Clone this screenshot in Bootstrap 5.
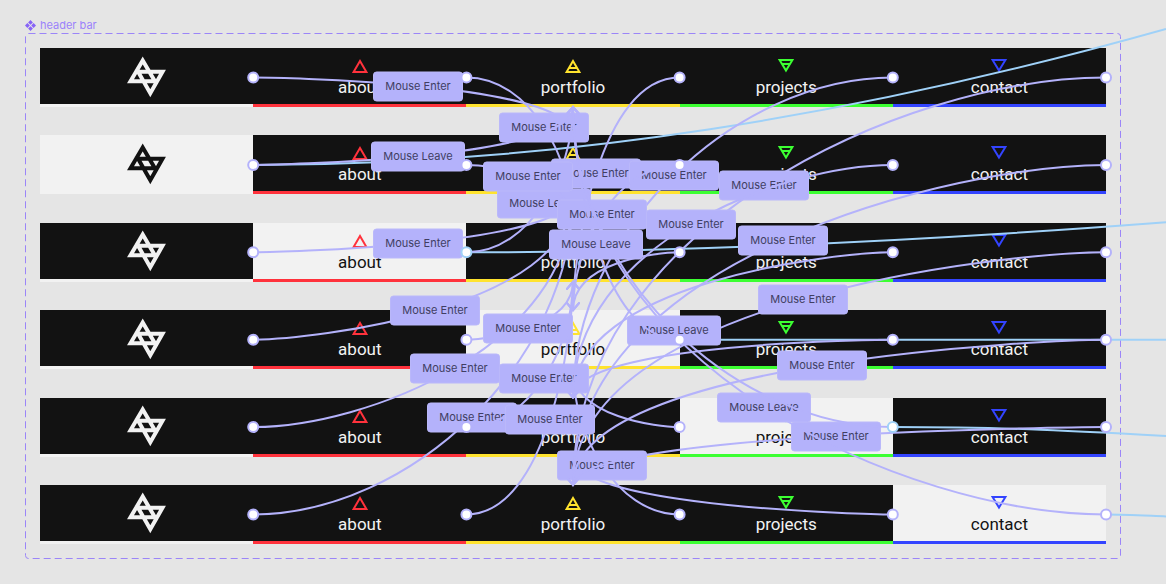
<!DOCTYPE html>
<html lang="en">
<head>
<meta charset="utf-8">
<meta name="viewport" content="width=device-width, initial-scale=1">
<title>header bar</title>
<link rel="stylesheet" href="https://cdn.jsdelivr.net/npm/bootstrap@5.3.0/dist/css/bootstrap.min.css">
<style>
  body { background: #e5e5e5; font-family: Inter, "Liberation Sans", sans-serif; }
  .board { min-height: 100vh; padding: 17px 45px 25px 25px; }
  .set-title { font-size: 11px; line-height: 16px; color: #9b82fb; gap: 4px; }
  .set-frame { padding: 15px; }
  .variant { height: 59px; }
  .tab { flex: 1 1 0; background: #121212; color: #f2f2f2; border-bottom: 3px solid var(--tone);
         font-family: Roboto, "Liberation Sans", sans-serif; font-size: 17px; line-height: 24px; }
  .tab.hovered { background: #f2f2f2; color: #121212; }
  .tab-item { padding: 10px 0 5px; gap: 3px; }
  .tone-white { --tone: #f2f2f2; }
  .tone-red { --tone: #ff323c; }
  .tone-yellow { --tone: #ffe32e; }
  .tone-green { --tone: #3cff32; }
  .tone-blue { --tone: #3344ff; }
  .glyph { fill: none; stroke: var(--tone); stroke-width: 2; }
  .logo { fill: none; stroke: currentColor; stroke-width: 4; }
  .wires { inset: 0; pointer-events: none; }
  .wire { fill: none; stroke: #b4b2fb; stroke-width: 2; }
  .wire-out { fill: none; stroke: #9fd1f8; stroke-width: 2; }
  .tip { fill: none; stroke: #b4b2fb; stroke-width: 2; stroke-linecap: round; }
  .pill { fill: #b4b2fb; stroke: #bab8fa; stroke-width: 1; }
  .pill-text { fill: #403e62; font-size: 11px; text-anchor: middle; }
  .knob { fill: #fff; stroke: #b4b2fb; stroke-width: 2; }
  .knob-out { stroke: #9fd1f8; }
  .outline { fill: none; stroke: #9b85f8; stroke-width: 1; stroke-dasharray: 7 4; }
</style>
</head>
<body>
<main class="board position-relative d-flex flex-column overflow-hidden" id="board">
  <div class="set-title d-flex align-items-center">
    <svg width="11" height="11" viewBox="0 0 11 11" fill="#8763f7" aria-hidden="true"><path d="M5.500 0 7.900 2.400 5.500 4.800 3.100 2.400zM5.500 6.200 7.900 8.600 5.500 11 3.100 8.600zM2.400 3.100 4.800 5.500 2.400 7.900 0 5.500zM8.600 3.100 11 5.500 8.600 7.900 6.200 5.500z"/></svg>
    <span>header bar</span>
  </div>
  <div class="set-frame flex-grow-1 d-flex flex-column justify-content-between" id="frame"></div>
  <svg class="wires position-absolute w-100 h-100" id="wires"></svg>
</main>
<script src="https://cdn.jsdelivr.net/npm/bootstrap@5.3.0/dist/js/bootstrap.bundle.min.js"></script>
<script>
  const tabs = [
    ['about', 'red', 'M8 3 14.400 14H1.600z'],
    ['portfolio', 'yellow', 'M8 3 14.400 14H1.600zM4.500 10H11.500'],
    ['projects', 'green', 'M8 12.500 14.400 2H1.600zM4.500 6H11.500'],
    ['contact', 'blue', 'M8 12.500 14.400 2H1.600z']
  ];
  const frame = document.getElementById('frame');
  for (let row = 0; row < 6; row++) {
    const on = col => row === col + 1 ? ' hovered' : '';
    let html = `<a href="#" aria-label="home" class="tab tone-white${on(0)} d-flex align-items-center justify-content-center">
      <svg class="logo" width="40" height="43" viewBox="0 0 40 43"><path d="M15.700 5.500 3.500 26.300H27.900zM35.500 16.800 23.300 38.300 11.100 16.800z"/></svg></a>`;
    tabs.forEach(([name, tone, shape], i) => {
      html += `<a href="#" class="tab tab-item tone-${tone}${on(i + 1)} d-flex flex-column align-items-center text-decoration-none">
        <svg class="glyph" width="16" height="14" viewBox="0 0 16 14" overflow="visible"><path d="${shape}"/></svg><span>${name}</span></a>`;
    });
    const nav = document.createElement('nav');
    nav.className = 'variant d-flex';
    nav.innerHTML = html;
    frame.append(nav);
  }

  // [source row, source tab, target row, midpoint x, midpoint y, label], back to front
  const E = 'Mouse Enter', L = 'Mouse Leave';
  const links = [
    [2,2,3,618,263,''], [4,2,3,618,416,''], [2,3,4,711,282,''], [3,3,4,728,348,''], [5,3,4,728,505,''],
    [0,0,1,418,86,E], [2,0,1,418,243,E], [3,0,1,435,310,E], [4,0,1,455,368,E], [5,0,1,472,417,E],
    [0,1,2,544,127,E], [2,1,0,544,203,L], [0,2,3,596,173,E], [1,1,2,528,176,E],
    [0,3,4,674,175,E], [5,2,3,602,465,E], [4,1,2,544,378,E],
    [0,4,5,764,185,E], [1,4,5,783,240,E], [2,4,5,803,299,E], [3,4,5,822,365,E], [4,4,5,836,436,E],
    [1,2,3,602,214,E], [1,3,4,691,224,E], [3,1,2,528,328,E], [5,1,2,550,419,E],
    [1,0,0,418,156,L], [5,4,0,764,407,L], [4,3,0,674,330,L], [3,2,0,596,244,L]
  ];

  function draw() {
    const board = document.getElementById('board').getBoundingClientRect();
    const box = el => {
      const r = el.getBoundingClientRect();
      return { l: r.left - board.left, r: r.right - board.left, t: r.top - board.top, b: r.bottom - board.top };
    };
    const sx = board.width / 1166, sy = board.height / 584;
    const rows = [...frame.children];
    const port = (r, c) => { const q = box(rows[r].children[c]); return [q.r, (q.t + q.b) / 2]; };
    const f = box(frame);
    let out = `<rect class="outline" x="${f.l + .5}" y="${f.t + .5}" width="${f.r - f.l - 1}" height="${f.b - f.t - 1}" rx="3"/>`;

    // Connections that leave the board on the right
    const W = board.width;
    [[1,0,.336,0,.665,-50,-136], [2,1,.334,0,.663,-12,-30], [3,2,.3,0,.6,0,0], [4,3,.4,0,.6,3,9], [5,4,.3,0,.6,1,2]]
      .forEach(([r, c, a, ay, b, by, ey]) => {
        const [x, y] = port(r, c), w = W - x;
        out += `<path class="wire-out" d="M${x} ${y}C${x + w * a} ${y + ay} ${x + w * b} ${y + by} ${W} ${y + ey}"/>`;
      });

    // The two handles are solved so that the curve passes through its label at the half-way point
    for (const [r, c, to, lx, ly, text] of links) {
      const [x, y] = port(r, c), t = box(rows[to]);
      const mx = lx * sx, my = ly * sy, tx = (t.l + t.r) / 2, down = to > r, ty = down ? t.t : t.b;
      const hx = (mx - x / 8 - tx / 2) / .375, hy = (my - y / 2 - ty / 8) / .375, k = down ? -7 : 7;
      out += `<path class="wire" d="M${x} ${y}C${hx} ${y} ${tx} ${hy} ${tx} ${ty}"/>`;
      out += `<path class="tip" d="M${tx - 6} ${ty + k}L${tx} ${ty}L${tx + 6} ${ty + k}"/>`;
      if (text) {
        const w = text === L ? 93 : 89;
        out += `<rect class="pill" x="${mx - w / 2}" y="${my - 14}" width="${w}" height="29" rx="3"/>`;
        out += `<text class="pill-text" x="${mx}" y="${my + 4}">${text}</text>`;
      }
    }
    for (let r = 0; r < 6; r++) for (let c = 0; c < 5; c++) {
      const [x, y] = port(r, c), blue = (r === 2 && c === 1) || (r === 4 && c === 3);
      out += `<circle class="knob${blue ? ' knob-out' : ''}" cx="${x}" cy="${y}" r="5"/>`;
    }
    document.getElementById('wires').innerHTML = out;
  }
  draw();
  addEventListener('resize', draw);
</script>
</body>
</html>
